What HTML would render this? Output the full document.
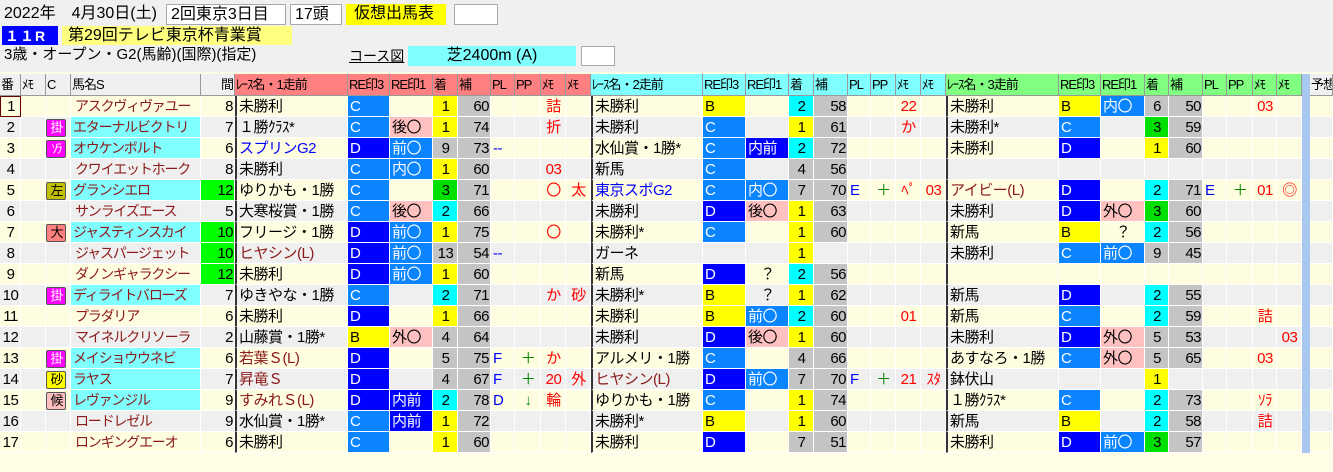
<!DOCTYPE html>
<html><head><meta charset="utf-8"><style>
body{margin:0;width:1333px;height:472px;background:#fffde6;font-family:"Liberation Sans","Noto Sans CJK JP",sans-serif;overflow:hidden;position:relative}
.top{position:absolute;background:#f0f0f0;left:0;top:0;width:1333px;height:72px}
.a{position:absolute;font-size:16px;line-height:20px;white-space:nowrap}
.bx{background:#fff;border:1px solid #aaa;box-sizing:border-box}
table{position:absolute;left:0;top:74px;border-collapse:separate;border-spacing:0;table-layout:fixed;width:1333px;font-size:15px;letter-spacing:-0.5px}
tr{height:21px}
td{height:21px;padding:0 1px 0 2px;box-sizing:border-box;border-right:1px solid #fff;border-bottom:1px solid #fff;white-space:nowrap;overflow:hidden;line-height:19px}
tr.h td{height:22px;background:#f0f0f0;font-size:13px;letter-spacing:-1px;padding:0 1px;border-right:1px solid #999;border-bottom:1px solid #999}
tr.h td.r1{background:#ff8080}tr.h td.r2{background:#80ffff}tr.h td.r3{background:#80ff80}
tr.o td{background:#fffde0}tr.e td{background:#efefef}
td.sep{border-left:2px solid #333}
tr td.C{background:#0a84ff;color:#fff}tr td.D{background:#0000ff;color:#fff}tr td.B{background:#ffff00}
tr td.L{background:#0a84ff;color:#fff}tr td.P{background:#ffc0c0}
tr td.Y{background:#ffff00;text-align:center}tr td.Q{background:#00ffff;text-align:center}tr td.G{background:#00e000;text-align:center}tr td.S{background:#c4c4c4;text-align:center}
tr td.H{background:#c4c4c4;text-align:right}
tr td.N{background:#80ffff}tr td.K{background:#00ff00;text-align:right}
tr td.bar{background:#a8c8f0;border:none}
.nm{color:#8b1a1a;font-size:14px;letter-spacing:-1.2px}.rd{color:#f00;text-align:center}.bl{color:#00f}.gn{color:#080;text-align:center}.dr{color:#8b1a1a}
.num{text-align:center}.rt{text-align:right}
.tg{display:inline-block;vertical-align:top;margin-top:1px;width:18px;height:16px;border:1px solid #555;border-radius:2px;font-size:13px;line-height:16px;text-align:center;margin-left:-2px;letter-spacing:-2px;overflow:hidden}
</style></head><body>
<div class="top"></div>
<div class="a" style="left:4px;top:4px">2022年　4月30日(土)</div>
<div class="a bx" style="left:166px;top:4px;width:120px;height:21px;padding-left:4px">2回東京3日目</div>
<div class="a bx" style="left:290px;top:4px;width:52px;height:21px;padding-left:4px">17頭</div>
<div class="a" style="left:346px;top:4px;width:100px;height:21px;background:#ffff00;padding-left:8px;box-sizing:border-box">仮想出馬表</div>
<div class="a bx" style="left:454px;top:4px;width:44px;height:21px"></div>
<div class="a" style="left:2px;top:26px;width:56px;height:19px;background:#0000ff;color:#fff;font-weight:bold;font-size:14px;letter-spacing:1px;padding-left:3px;box-sizing:border-box">１１R</div>
<div class="a" style="left:62px;top:26px;width:230px;height:19px;background:#ffff80;padding-left:6px;box-sizing:border-box">第29回テレビ東京杯青業賞</div>
<div class="a" style="left:4px;top:45px;font-size:15px">3歳・オープン・G2(馬齢)(国際)(指定)</div>
<div class="a" style="left:349px;top:46px;font-size:14px;text-decoration:underline">コース図</div>
<div class="a" style="left:408px;top:46px;width:168px;height:20px;background:#80ffff;text-align:center">芝2400m (A)</div>
<div class="a bx" style="left:581px;top:46px;width:34px;height:20px"></div>
<table>
<colgroup><col style="width:21px"><col style="width:25px"><col style="width:25px"><col style="width:130px"><col style="width:34px"><col style="width:113px"><col style="width:42px"><col style="width:43px"><col style="width:25px"><col style="width:33px"><col style="width:24px"><col style="width:26px"><col style="width:25px"><col style="width:25px"><col style="width:112px"><col style="width:43px"><col style="width:43px"><col style="width:25px"><col style="width:34px"><col style="width:23px"><col style="width:25px"><col style="width:25px"><col style="width:25px"><col style="width:113px"><col style="width:42px"><col style="width:44px"><col style="width:24px"><col style="width:34px"><col style="width:24px"><col style="width:26px"><col style="width:24px"><col style="width:25px"><col style="width:8px"><col style="width:23px"></colgroup>
<tr class="h"><td>番</td><td>ﾒﾓ</td><td>C</td><td>馬名S</td><td class="rt">間</td><td class="r1">ﾚｰｽ名・1走前</td><td class="r1">RE印3</td><td class="r1">RE印1</td><td class="r1">着</td><td class="r1">補</td><td class="r1">PL</td><td class="r1">PP</td><td class="r1">ﾒﾓ</td><td class="r1">ﾒﾓ</td><td class="r2">ﾚｰｽ名・2走前</td><td class="r2">RE印3</td><td class="r2">RE印1</td><td class="r2">着</td><td class="r2">補</td><td class="r2">PL</td><td class="r2">PP</td><td class="r2">ﾒﾓ</td><td class="r2">ﾒﾓ</td><td class="r3">ﾚｰｽ名・3走前</td><td class="r3">RE印3</td><td class="r3">RE印1</td><td class="r3">着</td><td class="r3">補</td><td class="r3">PL</td><td class="r3">PP</td><td class="r3">ﾒﾓ</td><td class="r3">ﾒﾓ</td><td class="bar" rowspan="19"></td><td>予想</td></tr>

<tr class="o"><td class="num" style="border:1px solid #600">1</td><td></td><td></td><td class="nm" style="padding-left:4px">アスクヴィヴァユー</td><td class="rt">8</td><td class="sep">未勝利</td><td class="C">C</td><td></td><td class="Y">1</td><td class="H">60</td><td></td><td></td><td class="rd">詰</td><td></td><td class="sep">未勝利</td><td class="B">B</td><td></td><td class="Q">2</td><td class="H">58</td><td></td><td></td><td class="rd">22</td><td></td><td class="sep">未勝利</td><td class="B">B</td><td class="L">内〇</td><td class="S">6</td><td class="H">50</td><td></td><td></td><td class="rd">03</td><td></td><td></td></tr>

<tr class="e"><td class="num">2</td><td></td><td><span class="tg" style="background:#ff00ff;color:#fff">掛</span></td><td class="N nm">エターナルビクトリ</td><td class="rt">7</td><td class="sep">１勝ｸﾗｽ*</td><td class="C">C</td><td class="P">後〇</td><td class="Y">1</td><td class="H">74</td><td></td><td></td><td class="rd">折</td><td></td><td class="sep">未勝利</td><td class="C">C</td><td></td><td class="Y">1</td><td class="H">61</td><td></td><td></td><td class="rd">か</td><td></td><td class="sep">未勝利*</td><td class="C">C</td><td></td><td class="G">3</td><td class="H">59</td><td></td><td></td><td></td><td></td><td></td></tr>

<tr class="o"><td class="num">3</td><td></td><td><span class="tg" style="background:#ff00ff;color:#fff">ｿﾗ</span></td><td class="N nm">オウケンボルト</td><td class="rt">6</td><td class="sep bl">スプリンG2</td><td class="D">D</td><td class="L">前〇</td><td class="S">9</td><td class="H">73</td><td class="bl">--</td><td></td><td></td><td></td><td class="sep">水仙賞・1勝*</td><td class="C">C</td><td class="D">内前</td><td class="Q">2</td><td class="H">72</td><td></td><td></td><td></td><td></td><td class="sep">未勝利</td><td class="D">D</td><td></td><td class="Y">1</td><td class="H">60</td><td></td><td></td><td></td><td></td><td></td></tr>

<tr class="e"><td class="num">4</td><td></td><td></td><td class="nm" style="padding-left:4px">クワイエットホーク</td><td class="rt">8</td><td class="sep">未勝利</td><td class="C">C</td><td class="L">内〇</td><td class="Y">1</td><td class="H">60</td><td></td><td></td><td class="rd">03</td><td></td><td class="sep">新馬</td><td class="C">C</td><td></td><td class="S">4</td><td class="H">56</td><td></td><td></td><td></td><td></td><td class="sep"></td><td></td><td></td><td></td><td></td><td></td><td></td><td></td><td></td><td></td></tr>

<tr class="o"><td class="num">5</td><td></td><td><span class="tg" style="background:#c0c000">左</span></td><td class="N nm">グランシエロ</td><td class="K">12</td><td class="sep">ゆりかも・1勝</td><td class="C">C</td><td></td><td class="G">3</td><td class="H">71</td><td></td><td></td><td class="rd">〇</td><td class="rd">太</td><td class="sep bl">東京スポG2</td><td class="C">C</td><td class="L">内〇</td><td class="S">7</td><td class="H">70</td><td class="bl">E</td><td class="gn">＋</td><td class="rd">ﾍﾟ</td><td class="rd">03</td><td class="sep dr">アイビー(L)</td><td class="D">D</td><td></td><td class="Q">2</td><td class="H">71</td><td class="bl">E</td><td class="gn">＋</td><td class="rd">01</td><td class="rd">◎</td><td></td></tr>

<tr class="e"><td class="num">6</td><td></td><td></td><td class="nm" style="padding-left:4px">サンライズエース</td><td class="rt">5</td><td class="sep">大寒桜賞・1勝</td><td class="C">C</td><td class="P">後〇</td><td class="Q">2</td><td class="H">66</td><td></td><td></td><td></td><td></td><td class="sep">未勝利</td><td class="D">D</td><td class="P">後〇</td><td class="Y">1</td><td class="H">63</td><td></td><td></td><td></td><td></td><td class="sep">未勝利</td><td class="D">D</td><td class="P">外〇</td><td class="G">3</td><td class="H">60</td><td></td><td></td><td></td><td></td><td></td></tr>

<tr class="o"><td class="num">7</td><td></td><td><span class="tg" style="background:#ff8080">大</span></td><td class="N nm">ジャスティンスカイ</td><td class="K">10</td><td class="sep">フリージ・1勝</td><td class="D">D</td><td class="L">前〇</td><td class="Y">1</td><td class="H">75</td><td></td><td></td><td class="rd">〇</td><td></td><td class="sep">未勝利*</td><td class="C">C</td><td></td><td class="Y">1</td><td class="H">60</td><td></td><td></td><td></td><td></td><td class="sep">新馬</td><td class="B">B</td><td class="num">？</td><td class="Q">2</td><td class="H">56</td><td></td><td></td><td></td><td></td><td></td></tr>

<tr class="e"><td class="num">8</td><td></td><td></td><td class="nm" style="padding-left:4px">ジャスパージェット</td><td class="K">10</td><td class="sep dr">ヒヤシン(L)</td><td class="D">D</td><td class="L">前〇</td><td class="S">13</td><td class="H">54</td><td class="bl">--</td><td></td><td></td><td></td><td class="sep">ガーネ</td><td></td><td></td><td class="Y">1</td><td></td><td></td><td></td><td></td><td></td><td class="sep">未勝利</td><td class="C">C</td><td class="L">前〇</td><td class="S">9</td><td class="H">45</td><td></td><td></td><td></td><td></td><td></td></tr>

<tr class="o"><td class="num">9</td><td></td><td></td><td class="nm" style="padding-left:4px">ダノンギャラクシー</td><td class="K">12</td><td class="sep">未勝利</td><td class="D">D</td><td class="L">前〇</td><td class="Y">1</td><td class="H">60</td><td></td><td></td><td></td><td></td><td class="sep">新馬</td><td class="D">D</td><td class="num">？</td><td class="Q">2</td><td class="H">56</td><td></td><td></td><td></td><td></td><td class="sep"></td><td></td><td></td><td></td><td></td><td></td><td></td><td></td><td></td><td></td></tr>

<tr class="e"><td class="num">10</td><td></td><td><span class="tg" style="background:#ff00ff;color:#fff">掛</span></td><td class="N nm">ディライトバローズ</td><td class="rt">7</td><td class="sep">ゆきやな・1勝</td><td class="C">C</td><td></td><td class="Q">2</td><td class="H">71</td><td></td><td></td><td class="rd">か</td><td class="rd">砂</td><td class="sep">未勝利*</td><td class="B">B</td><td class="num">？</td><td class="Y">1</td><td class="H">62</td><td></td><td></td><td></td><td></td><td class="sep">新馬</td><td class="D">D</td><td></td><td class="Q">2</td><td class="H">55</td><td></td><td></td><td></td><td></td><td></td></tr>

<tr class="o"><td class="num">11</td><td></td><td></td><td class="nm" style="padding-left:4px">プラダリア</td><td class="rt">6</td><td class="sep">未勝利</td><td class="D">D</td><td></td><td class="Y">1</td><td class="H">66</td><td></td><td></td><td></td><td></td><td class="sep">未勝利</td><td class="B">B</td><td class="L">前〇</td><td class="Q">2</td><td class="H">60</td><td></td><td></td><td class="rd">01</td><td></td><td class="sep">新馬</td><td class="C">C</td><td></td><td class="Q">2</td><td class="H">59</td><td></td><td></td><td class="rd">詰</td><td></td><td></td></tr>

<tr class="e"><td class="num">12</td><td></td><td></td><td class="nm" style="padding-left:4px">マイネルクリソーラ</td><td class="rt">2</td><td class="sep">山藤賞・1勝*</td><td class="B">B</td><td class="P">外〇</td><td class="S">4</td><td class="H">64</td><td></td><td></td><td></td><td></td><td class="sep">未勝利</td><td class="D">D</td><td class="P">後〇</td><td class="Y">1</td><td class="H">60</td><td></td><td></td><td></td><td></td><td class="sep">未勝利</td><td class="D">D</td><td class="P">外〇</td><td class="S">5</td><td class="H">53</td><td></td><td></td><td></td><td class="rd">03</td><td></td></tr>

<tr class="o"><td class="num">13</td><td></td><td><span class="tg" style="background:#ff00ff;color:#fff">掛</span></td><td class="N nm">メイショウウネビ</td><td class="rt">6</td><td class="sep dr">若葉Ｓ(L)</td><td class="D">D</td><td></td><td class="S">5</td><td class="H">75</td><td class="bl">F</td><td class="gn">＋</td><td class="rd">か</td><td></td><td class="sep">アルメリ・1勝</td><td class="C">C</td><td></td><td class="S">4</td><td class="H">66</td><td></td><td></td><td></td><td></td><td class="sep">あすなろ・1勝</td><td class="C">C</td><td class="P">外〇</td><td class="S">5</td><td class="H">65</td><td></td><td></td><td class="rd">03</td><td></td><td></td></tr>

<tr class="e"><td class="num">14</td><td></td><td><span class="tg" style="background:#ffff00">砂</span></td><td class="N nm">ラヤス</td><td class="rt">7</td><td class="sep dr">昇竜Ｓ</td><td class="D">D</td><td></td><td class="S">4</td><td class="H">67</td><td class="bl">F</td><td class="gn">＋</td><td class="rd">20</td><td class="rd">外</td><td class="sep dr">ヒヤシン(L)</td><td class="D">D</td><td class="L">前〇</td><td class="S">7</td><td class="H">70</td><td class="bl">F</td><td class="gn">＋</td><td class="rd">21</td><td class="rd">ｽﾀ</td><td class="sep">鉢伏山</td><td></td><td></td><td class="Y">1</td><td></td><td></td><td></td><td></td><td></td><td></td></tr>

<tr class="o"><td class="num">15</td><td></td><td><span class="tg" style="background:#ffc0c0">候</span></td><td class="N nm">レヴァンジル</td><td class="rt">9</td><td class="sep dr">すみれＳ(L)</td><td class="D">D</td><td class="D">内前</td><td class="Q">2</td><td class="H">78</td><td class="bl">D</td><td class="gn">↓</td><td class="rd">輪</td><td></td><td class="sep">ゆりかも・1勝</td><td class="C">C</td><td></td><td class="Y">1</td><td class="H">74</td><td></td><td></td><td></td><td></td><td class="sep">１勝ｸﾗｽ*</td><td class="C">C</td><td></td><td class="Q">2</td><td class="H">73</td><td></td><td></td><td class="rd">ｿﾗ</td><td></td><td></td></tr>

<tr class="e"><td class="num">16</td><td></td><td></td><td class="nm" style="padding-left:4px">ロードレゼル</td><td class="rt">9</td><td class="sep">水仙賞・1勝*</td><td class="C">C</td><td class="D">内前</td><td class="Y">1</td><td class="H">72</td><td></td><td></td><td></td><td></td><td class="sep">未勝利*</td><td class="B">B</td><td></td><td class="Y">1</td><td class="H">60</td><td></td><td></td><td></td><td></td><td class="sep">新馬</td><td class="B">B</td><td></td><td class="Q">2</td><td class="H">58</td><td></td><td></td><td class="rd">詰</td><td></td><td></td></tr>

<tr class="o"><td class="num">17</td><td></td><td></td><td class="nm" style="padding-left:4px">ロンギングエーオ</td><td class="rt">6</td><td class="sep">未勝利</td><td class="C">C</td><td></td><td class="Y">1</td><td class="H">60</td><td></td><td></td><td></td><td></td><td class="sep">未勝利</td><td class="D">D</td><td></td><td class="S">7</td><td class="H">51</td><td></td><td></td><td></td><td></td><td class="sep">未勝利</td><td class="D">D</td><td class="L">前〇</td><td class="G">3</td><td class="H">57</td><td></td><td></td><td></td><td></td><td></td></tr>
</table>
</body></html>
